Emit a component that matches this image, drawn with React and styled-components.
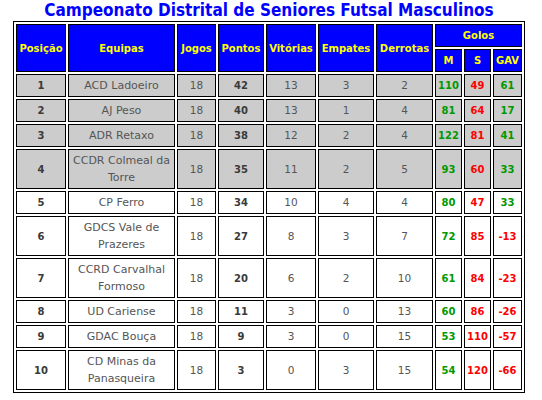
import React from "react";
import styled, { createGlobalStyle } from "styled-components";

const Global = createGlobalStyle`
  html, body { margin: 0; padding: 0; background: #ffffff; }
  body { font-family: "DejaVu Sans", Verdana, sans-serif; }
`;

const Page = styled.div`
  width: 538px;
  display: flex;
  flex-direction: column;
  align-items: center;
`;

const Title = styled.h1`
  margin: 0;
  font-family: "DejaVu Sans Condensed", "DejaVu Sans", sans-serif;
  font-stretch: condensed;
  font-weight: bold;
  font-size: 17px;
  line-height: 21px;
  height: 21px;
  color: #0000ff;
  white-space: nowrap;
`;

const Table = styled.table`
  table-layout: fixed;
  width: 512px;
  border-collapse: separate;
  border-spacing: 2px;
  border: 1px solid #000;
  font-size: 11px;
  line-height: 17px;
`;

const HeadCell = styled.th`
  background: #0000ff;
  color: #ffff00;
  font-weight: bold;
  font-size: 10px;
  border: 1px solid #000;
  padding: 2px 0;
  text-align: center;
  vertical-align: middle;
  white-space: nowrap;
`;

const Row = styled.tr`
  background: ${(p) => (p.$shaded ? "#cccccc" : "#ffffff")};
`;

const toneColor = { green: "#009900", red: "#ff0000" };

const Cell = styled.td`
  border: 1px solid #000;
  padding: 2px 1px;
  text-align: center;
  vertical-align: middle;
  font-size: ${(p) => (p.$wrap ? "11px" : p.$bold || p.$tone ? "10px" : "10.5px")};
  color: ${(p) => (p.$tone ? toneColor[p.$tone] : p.$bold ? "#3a3a3a" : "#555555")};
  font-weight: ${(p) => (p.$bold || p.$tone ? "bold" : "normal")};
  white-space: ${(p) => (p.$wrap ? "normal" : "nowrap")};
`;

const widths = [50, 107, 39, 46, 50, 56, 57, 27, 27, 29];

const rows = [
  [1, "ACD Ladoeiro", 18, 42, 13, 3, 2, 110, 49, 61],
  [2, "AJ Peso", 18, 40, 13, 1, 4, 81, 64, 17],
  [3, "ADR Retaxo", 18, 38, 12, 2, 4, 122, 81, 41],
  [4, "CCDR Colmeal da Torre", 18, 35, 11, 2, 5, 93, 60, 33],
  [5, "CP Ferro", 18, 34, 10, 4, 4, 80, 47, 33],
  [6, "GDCS Vale de Prazeres", 18, 27, 8, 3, 7, 72, 85, -13],
  [7, "CCRD Carvalhal Formoso", 18, 20, 6, 2, 10, 61, 84, -23],
  [8, "UD Cariense", 18, 11, 3, 0, 13, 60, 86, -26],
  [9, "GDAC Bouça", 18, 9, 3, 0, 15, 53, 110, -57],
  [10, "CD Minas da Panasqueira", 18, 3, 0, 3, 15, 54, 120, -66],
];

export default function App() {
  return (
    <Page>
      <Global />
      <Title>Campeonato Distrital de Seniores Futsal Masculinos</Title>
      <Table>
        <colgroup>
          {widths.map((w, i) => (
            <col key={i} style={{ width: w }} />
          ))}
        </colgroup>
        <thead>
          <tr>
            <HeadCell rowSpan={2}>Posição</HeadCell>
            <HeadCell rowSpan={2}>Equipas</HeadCell>
            <HeadCell rowSpan={2}>Jogos</HeadCell>
            <HeadCell rowSpan={2}>Pontos</HeadCell>
            <HeadCell rowSpan={2}>Vitórias</HeadCell>
            <HeadCell rowSpan={2}>Empates</HeadCell>
            <HeadCell rowSpan={2}>Derrotas</HeadCell>
            <HeadCell colSpan={3}>Golos</HeadCell>
          </tr>
          <tr>
            <HeadCell>M</HeadCell>
            <HeadCell>S</HeadCell>
            <HeadCell>GAV</HeadCell>
          </tr>
        </thead>
        <tbody>
          {rows.map((r) => (
            <Row key={r[0]} $shaded={r[0] <= 4}>
              <Cell $bold>{r[0]}</Cell>
              <Cell $wrap>{r[1]}</Cell>
              <Cell>{r[2]}</Cell>
              <Cell $bold>{r[3]}</Cell>
              <Cell>{r[4]}</Cell>
              <Cell>{r[5]}</Cell>
              <Cell>{r[6]}</Cell>
              <Cell $tone="green">{r[7]}</Cell>
              <Cell $tone="red">{r[8]}</Cell>
              <Cell $tone={r[9] < 0 ? "red" : "green"}>{r[9]}</Cell>
            </Row>
          ))}
        </tbody>
      </Table>
    </Page>
  );
}
